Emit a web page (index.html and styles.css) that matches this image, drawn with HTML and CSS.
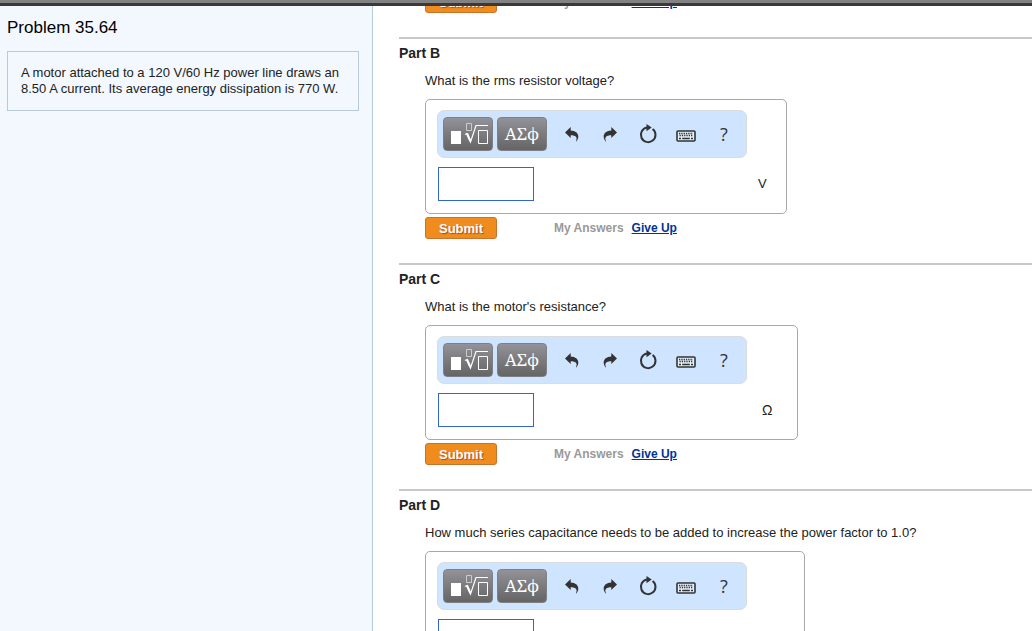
FILE: index.html
```html
<!DOCTYPE html>
<html lang="en">
<head>
  <meta charset="UTF-8">
  <meta name="viewport" content="width=device-width, initial-scale=1">
  <title>Problem 35.64</title>
  <link rel="stylesheet" href="styles.css">
</head>
<body>
  <!-- shared icons -->
  <svg class="sprite" aria-hidden="true">
    <symbol id="i-root" viewBox="0 0 40 26">
      <rect x="3" y="10" width="10" height="13" fill="#fff"/>
      <path d="M18.500 2.500h5v7h-5z" fill="none" stroke="#ccc"/>
      <path d="M17 13.500l2-1 3.500 8.500L28 4.500h12" fill="none" stroke="#fff" stroke-width="1.200"/>
      <path d="M19 12.500l3.300 7.500" fill="none" stroke="#fff" stroke-width="2"/>
      <path d="M30.500 9.500h9v13h-9z" fill="none" stroke="#fff"/>
    </symbol>
    <symbol id="i-undo" viewBox="0 0 16 16">
      <path d="M1 6.500L6.700 1v3.400c4.800.2 7.600 2.700 7.600 6.200 0 2-.8 3.600-2 4.900-.4-.1-.4-.4-.2-.8 1.600-3.400-.4-5.300-5.400-5.400V12z" fill="#333"/>
    </symbol>
    <symbol id="i-reset" viewBox="0 0 20 20">
      <path d="M14.600 5A7.300 7.300 0 1 1 9 3.600" fill="none" stroke="#333" stroke-width="2"/>
      <path d="M8.500 0l5.200 3.600L8.500 7.200z" fill="#333"/>
    </symbol>
    <symbol id="i-keyboard" viewBox="0 0 20 12">
      <rect x="1" y="1" width="18" height="10" rx="1" fill="#e4f0fc" stroke="#333" stroke-width="1.600"/>
      <path d="M3 3.500h14M3.500 5.500h13" stroke="#333" stroke-width="1.300" stroke-dasharray="1.300 1"/>
      <path d="M3 8.500h2M6.200 8.500h7.600M15 8.500h2" stroke="#333" stroke-width="1.300"/>
    </symbol>
  </svg>

  <div class="topbar"></div>
  <div class="page">
    <aside class="sidebar">
      <h1>Problem 35.64</h1>
      <p class="statement">A motor attached to a 120 V/60 Hz power line draws an 8.50 A current. Its average energy dissipation is 770 W.</p>
    </aside>

    <main class="parts">
      <section class="part part-scrolled" aria-label="Part A">
        <div class="actions">
          <button type="button" class="submit">Submit</button>
          <span class="my-answers">My Answers</span>
          <a href="#" class="give-up">Give Up</a>
        </div>
      </section>

      <section class="part">
        <h2>Part B</h2>
        <label class="question" for="answerB">What is the rms resistor voltage?</label>
        <div class="answer-box">
          <div class="toolbar">
            <button type="button" class="palette" aria-label="Templates"><svg width="40" height="26"><use href="#i-root"/></svg></button>
            <button type="button" class="palette">ΑΣϕ</button>
            <div class="tools">
              <button type="button" class="tool" aria-label="Undo"><svg width="16" height="16"><use href="#i-undo"/></svg></button>
              <button type="button" class="tool" aria-label="Redo"><svg class="flip" width="16" height="16"><use href="#i-undo"/></svg></button>
              <button type="button" class="tool" aria-label="Reset"><svg width="20" height="20"><use href="#i-reset"/></svg></button>
              <button type="button" class="tool keyboard" aria-label="Keyboard"><svg width="20" height="12"><use href="#i-keyboard"/></svg></button>
              <button type="button" class="tool help">?</button>
            </div>
          </div>
          <div class="entry">
            <input type="text" id="answerB">
            <span class="unit">V</span>
          </div>
        </div>
        <div class="actions">
          <button type="button" class="submit">Submit</button>
          <span class="my-answers">My Answers</span>
          <a href="#" class="give-up">Give Up</a>
        </div>
      </section>

      <section class="part">
        <h2>Part C</h2>
        <label class="question" for="answerC">What is the motor's resistance?</label>
        <div class="answer-box">
          <div class="toolbar">
            <button type="button" class="palette" aria-label="Templates"><svg width="40" height="26"><use href="#i-root"/></svg></button>
            <button type="button" class="palette">ΑΣϕ</button>
            <div class="tools">
              <button type="button" class="tool" aria-label="Undo"><svg width="16" height="16"><use href="#i-undo"/></svg></button>
              <button type="button" class="tool" aria-label="Redo"><svg class="flip" width="16" height="16"><use href="#i-undo"/></svg></button>
              <button type="button" class="tool" aria-label="Reset"><svg width="20" height="20"><use href="#i-reset"/></svg></button>
              <button type="button" class="tool keyboard" aria-label="Keyboard"><svg width="20" height="12"><use href="#i-keyboard"/></svg></button>
              <button type="button" class="tool help">?</button>
            </div>
          </div>
          <div class="entry">
            <input type="text" id="answerC">
            <span class="unit unit-symbol">Ω</span>
          </div>
        </div>
        <div class="actions">
          <button type="button" class="submit">Submit</button>
          <span class="my-answers">My Answers</span>
          <a href="#" class="give-up">Give Up</a>
        </div>
      </section>

      <section class="part">
        <h2>Part D</h2>
        <label class="question" for="answerD">How much series capacitance needs to be added to increase the power factor to 1.0?</label>
        <div class="answer-box">
          <div class="toolbar">
            <button type="button" class="palette" aria-label="Templates"><svg width="40" height="26"><use href="#i-root"/></svg></button>
            <button type="button" class="palette">ΑΣϕ</button>
            <div class="tools">
              <button type="button" class="tool" aria-label="Undo"><svg width="16" height="16"><use href="#i-undo"/></svg></button>
              <button type="button" class="tool" aria-label="Redo"><svg class="flip" width="16" height="16"><use href="#i-undo"/></svg></button>
              <button type="button" class="tool" aria-label="Reset"><svg width="20" height="20"><use href="#i-reset"/></svg></button>
              <button type="button" class="tool keyboard" aria-label="Keyboard"><svg width="20" height="12"><use href="#i-keyboard"/></svg></button>
              <button type="button" class="tool help">?</button>
            </div>
          </div>
          <div class="entry">
            <input type="text" id="answerD">
            <span class="unit unit-symbol">μF</span>
          </div>
        </div>
      </section>
    </main>
  </div>
</body>
</html>
```

FILE: styles.css
```css
*, *:before, *:after {
  box-sizing: border-box;
}

body {
  display: flex;
  flex-direction: column;
  height: 100vh;
  margin: 0;
  overflow: hidden;
  background: #fff;
  color: #222;
  font-family: "Liberation Sans", Arial, sans-serif;
  font-size: 13px;
  line-height: 16px;
}

button, input {
  font-family: inherit;
  margin: 0;
  padding: 0;
}

.sprite {
  display: none;
}

.topbar {
  flex: none;
  height: 6px;
  background: #828282;
  border-bottom: 3px solid #3a3838;
}

.page {
  display: flex;
  flex: 1;
  min-height: 0;
}

/* Left column */
.sidebar {
  flex: none;
  width: 373px;
  padding: 12px 13px 0 7px;
  background: #f3f8ff;
  border-right: 1px solid #b8cad9;
}

.sidebar h1 {
  margin: 0 0 13px;
  color: #000;
  font-size: 17px;
  font-weight: 400;
  line-height: 20px;
}

.statement {
  margin: 0;
  padding: 13px;
  border: 1px solid #b8cad9;
}

/* Parts */
.parts {
  flex: 1;
  min-width: 0;
  padding-left: 26px;
  overflow: hidden;
}

.part {
  padding: 5px 0 24px 26px;
  border-top: 2px solid #c8c8c8;
}

.part-scrolled {
  margin-top: -18px;
  padding-top: 0;
  border-top: 0;
}

.part h2 {
  margin: 0 0 11px -26px;
  font-size: 14px;
  line-height: 18px;
}

.question {
  display: block;
}

.answer-box {
  width: fit-content;
  margin-top: 10px;
  padding: 10px 0 12px 11px;
  border: 1px solid #a8a8a8;
  border-radius: 5px;
}

.toolbar {
  display: flex;
  align-items: center;
  gap: 4px;
  width: 310px;
  height: 48px;
  padding-left: 5px;
  background: #cfe5ff;
  border: 1px solid #dcdcdc;
  border-radius: 7px;
}

.palette {
  display: flex;
  flex: none;
  align-items: center;
  justify-content: center;
  width: 50px;
  height: 34px;
  background: linear-gradient(#929298, #656565);
  border: 1px solid #808084;
  border-radius: 4px;
  color: #fff;
  font-family: "Noto Serif", "DejaVu Serif", "Liberation Serif", serif;
  font-size: 17px;
  line-height: 20px;
}

.tools {
  display: flex;
  flex: none;
  margin-left: 2px;
}

.tool {
  display: flex;
  align-items: center;
  justify-content: center;
  width: 38px;
  height: 34px;
  background: none;
  border: 0;
  color: #333;
}

.flip {
  transform: scaleX(-1);
}

.keyboard {
  padding-top: 4px;
}

.help {
  font-family: "Open Sans", sans-serif;
  font-size: 18px;
  line-height: 20px;
}

.entry {
  display: flex;
  align-items: center;
  margin: 9px 0 0 1px;
}

.entry input {
  width: 96px;
  height: 34px;
  padding: 0 6px;
  border: 1px solid #36c;
  font-size: 14px;
}

.unit {
  margin: 0 19px 0 224px;
}

.unit-symbol {
  margin: 0 25px 0 228px;
  font-size: 14px;
}

.actions {
  display: flex;
  align-items: center;
  margin-top: 3px;
  font-size: 12px;
  font-weight: 700;
}

.submit {
  width: 72px;
  height: 22px;
  background: #f08c1e;
  border: 1px solid #c8722c;
  border-radius: 3px;
  color: #fff;
  font-size: 13px;
  font-weight: 700;
  text-shadow: 1px 1px 1px #a0501e;
}

.my-answers {
  margin: 0 8px 0 57px;
  color: #999;
}

.give-up {
  color: #039;
}
```
